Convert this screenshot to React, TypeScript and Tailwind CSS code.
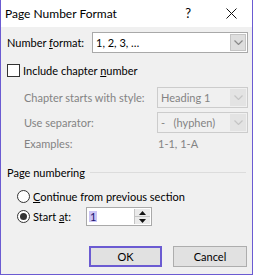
import React from "react";

const font = { fontFamily: 'Lato, "Noto Sans", sans-serif' };

const Chevron = ({ color }: { color: string }) => (
  <svg width="9" height="5" viewBox="0 0 9 5" fill="none">
    <path d="M0.5 0.5 L4.5 4.5 L8.5 0.5" stroke={color} strokeWidth="1.2" />
  </svg>
);

interface ComboProps {
  value: string;
  width: string;
  disabled?: boolean;
}

const Combo: React.FC<ComboProps> = ({ value, width, disabled }) => (
  <div
    className={`flex h-[21px] shrink-0 items-stretch border ${width} ${
      disabled ? "border-[#cccccc] bg-[#f0f0f0] text-[#838383]" : "border-[#a9a9a9] bg-white text-black"
    }`}
  >
    <div className="flex flex-1 items-center pl-[3px] whitespace-pre">{value}</div>
    <div
      className={`m-px flex w-[16px] items-center justify-center ${
        disabled ? "bg-[#e3e3e3]" : "border border-[#c4c4c4] bg-[#dedede]"
      }`}
    >
      <Chevron color={disabled ? "#c4c4c4" : "#8a8a8a"} />
    </div>
  </div>
);

const Radio = ({ checked }: { checked?: boolean }) => (
  <div className="flex h-[13px] w-[13px] shrink-0 items-center justify-center rounded-full border border-[#333333] bg-white">
    {checked && <div className="h-[7px] w-[7px] rounded-full bg-[#333333]" />}
  </div>
);

const Button = ({ label, primary }: { label: string; primary?: boolean }) => (
  <div
    className={`flex h-[21px] items-center justify-center bg-[#e1e1e1] ${
      primary ? "w-[73px] border-2 border-[#6b5bd2]" : "w-[74px] border border-[#adadad]"
    }`}
  >
    {label}
  </div>
);

export default function App() {
  return (
    <div
      className="h-[277px] w-[255px] bg-white text-[11px] leading-none whitespace-nowrap text-black"
      style={font}
    >
      <div className="flex h-[275px] w-[253px] flex-col border-x border-b border-[#6b5bd2] bg-[#f0f0f0]">
        {/* title bar */}
        <div className="flex h-[27px] shrink-0 items-center bg-white">
          <span className="pl-[4px] text-[12px]">Page Number Format</span>
          <span className="ml-auto mr-[35px] text-[13px]">?</span>
          <svg className="mr-[15px]" width="11" height="11" viewBox="0 0 11 11">
            <path d="M0.5 0.5 L10.5 10.5 M10.5 0.5 L0.5 10.5" stroke="#111" strokeWidth="1" />
          </svg>
        </div>

        {/* number format */}
        <div className="mt-[5px] flex items-center pl-[6px]">
          <span className="w-[85px]">
            Number <u>f</u>ormat:
          </span>
          <Combo value="1, 2, 3, …" width="w-[156px]" />
        </div>

        {/* include chapter number */}
        <div className="mt-[11px] flex h-[13px] items-center pl-[6px]">
          <div className="h-[13px] w-[13px] border border-[#333333] bg-white" />
          <span className="ml-[3px]">
            Include chapter <u>n</u>umber
          </span>
        </div>

        {/* chapter options */}
        <div className="mt-[10px] flex flex-col gap-[4px] text-[#838383]">
          <div className="flex items-center pl-[23px]">
            <span className="w-[133px]">Chapter starts with style:</span>
            <Combo value="Heading 1" width="w-[91px]" disabled />
          </div>
          <div className="flex items-center pl-[23px]">
            <span className="w-[133px]">Use separator:</span>
            <Combo value="-   (hyphen)" width="w-[91px]" disabled />
          </div>
          <div className="flex h-[12px] items-center pl-[23px]">
            <span className="w-[133px]">Examples:</span>
            <span className="pl-[1px]">1-1, 1-A</span>
          </div>
        </div>

        {/* page numbering */}
        <div className="mt-[16px] flex h-[15px] items-center pl-[6px]">
          <span>Page numbering</span>
          <div className="ml-[5px] mr-[6px] h-px flex-1 bg-[#dcdcdc]" />
        </div>

        <div className="mt-[9px] flex h-[14px] items-center pl-[16px]">
          <Radio />
          <span className="ml-[3px]">
            <u>C</u>ontinue from previous section
          </span>
        </div>

        <div className="mt-[4px] flex items-center pl-[16px]">
          <Radio checked />
          <span className="ml-[3px] w-[53px]">
            Start <u>a</u>t:
          </span>
          <div className="flex h-[19px] w-[66px] items-stretch border border-[#a9a9a9] bg-white">
            <div className="flex flex-1 items-center pl-[2px]">
              <span className="bg-[#cbc4f4] px-[1px] text-[#1c1270]">1</span>
            </div>
            <div className="my-px mr-px flex w-[16px] flex-col border-l border-[#c4c4c4]">
              <div className="flex flex-1 items-center justify-center border-b border-[#c4c4c4] bg-[#eaeaea]">
                <svg width="7" height="4" viewBox="0 0 7 4">
                  <path d="M0 4 L3.5 0 L7 4 Z" fill="#111" />
                </svg>
              </div>
              <div className="flex flex-1 items-center justify-center bg-[#eaeaea]">
                <svg width="7" height="4" viewBox="0 0 7 4">
                  <path d="M0 0 L3.5 4 L7 0 Z" fill="#111" />
                </svg>
              </div>
            </div>
          </div>
        </div>

        {/* buttons */}
        <div className="mt-auto mb-[7px] flex justify-end gap-[11px] pr-[5px]">
          <Button label="OK" primary />
          <Button label="Cancel" />
        </div>
      </div>
    </div>
  );
}
